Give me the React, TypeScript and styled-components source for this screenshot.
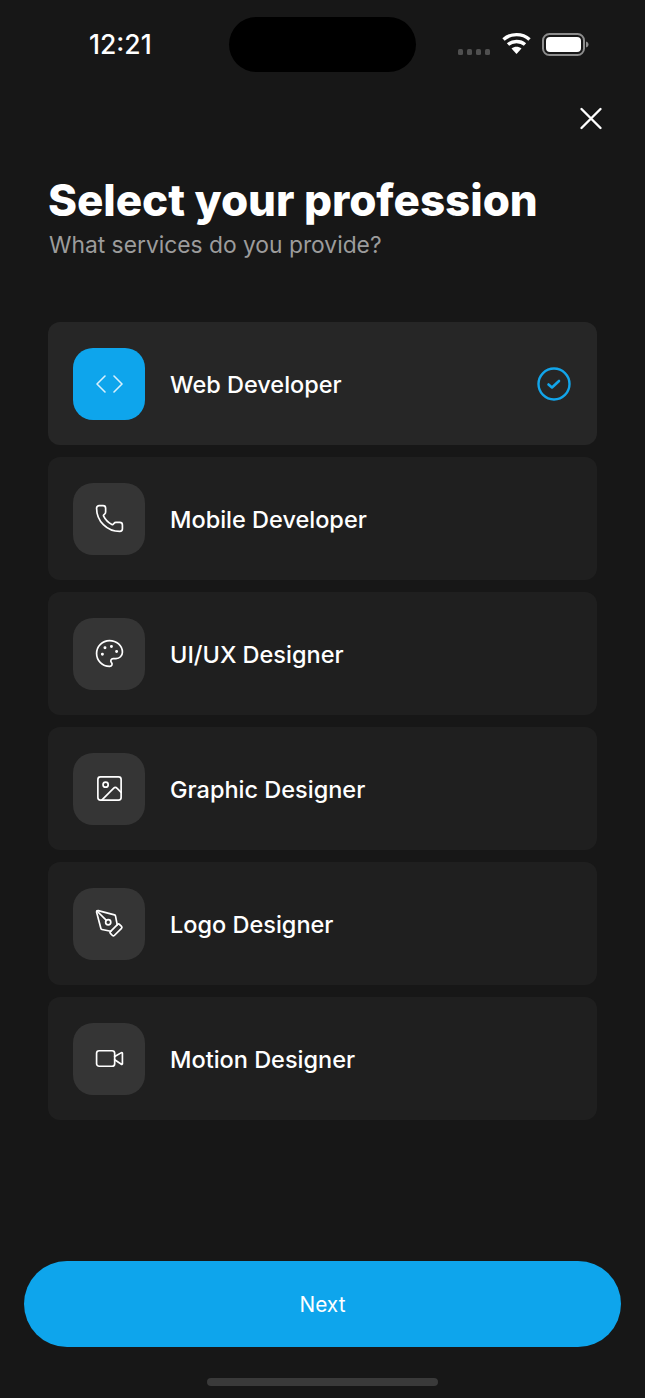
import React from "react";
import styled, { createGlobalStyle } from "styled-components";
import { Phone, Palette, Image, PenTool, Video } from "lucide-react";

const Global = createGlobalStyle`
  html, body { margin: 0; padding: 0; background: #171717; }
  * { box-sizing: border-box; }
  body { font-family: Inter, "Liberation Sans", sans-serif; color: #fff; }
`;

const Screen = styled.div`
  width: 645px;
  height: 1398px;
  display: flex;
  flex-direction: column;
  background: #171717;
  overflow: hidden;
`;

const StatusBar = styled.div`
  display: grid;
  grid-template-columns: 229px 187px 1fr;
  align-items: center;
  height: 55px;
  margin-top: 17px;
`;

const Time = styled.div`
  padding-left: 89px;
  font-size: 26.5px;
  font-weight: 500;
  letter-spacing: 0;
  line-height: 55px;
`;

const Island = styled.div`
  height: 55px;
  background: #000;
  border-radius: 28px;
`;

const StatusIcons = styled.div`
  display: flex;
  align-items: center;
  justify-content: flex-start;
  padding-left: 42px;
  height: 55px;
`;

const CloseRow = styled.div`
  display: flex;
  justify-content: flex-end;
  padding: 35px 42px 0 0;
`;

const Heading = styled.div`
  padding: 43px 48px 0;
`;

const Title = styled.h1`
  margin: 0;
  font-size: 44px;
  line-height: 52px;
  font-weight: 800;
  letter-spacing: -0.06px;
`;

const Subtitle = styled.p`
  margin: 4px 0 1px 1px;
  font-size: 22.8px;
  line-height: 30px;
  font-weight: 400;
  color: #9c9c9c;
`;

const List = styled.div`
  display: flex;
  flex-direction: column;
  gap: 12px;
  margin: 61px 48px 0;
`;

const Card = styled.div<{ $selected?: boolean }>`
  height: 123px;
  display: flex;
  align-items: center;
  gap: 25px;
  padding: 0 26px 0 25px;
  border-radius: 12px;
  background: ${(p) => (p.$selected ? "#262626" : "#1f1f1f")};
`;

const Tile = styled.div<{ $selected?: boolean }>`
  width: 72px;
  height: 72px;
  flex: none;
  display: flex;
  align-items: center;
  justify-content: center;
  border-radius: 20px;
  color: #fff;
  background: ${(p) => (p.$selected ? "#0ea5ec" : "#353535")};
`;

const Label = styled.div`
  flex: 1;
  margin-top: 2px;
  font-size: 23.5px;
  font-weight: 500;
  line-height: 30px;
`;

const Footer = styled.div`
  margin-top: auto;
  padding: 0 24px;
  display: flex;
  flex-direction: column;
  align-items: center;
`;

const NextButton = styled.button`
  width: 100%;
  height: 86px;
  border: 0;
  border-radius: 43px;
  background: #0ea5ec;
  color: #fff;
  font-family: inherit;
  font-size: 20.8px;
  font-weight: 400;
`;

const HomeBar = styled.div`
  width: 231px;
  height: 8px;
  margin: 31px 0 12px;
  border-radius: 4px;
  background: #3a3a3a;
`;

const CodeIcon = () => (
  <svg width="28" height="28" viewBox="0 0 28 28" fill="none" stroke="#d8f0fc" strokeWidth="1.6" strokeLinecap="round" strokeLinejoin="round">
    <path d="M10 6 2 14l8 8" />
    <path d="M19 6l8 8-8 8" />
  </svg>
);

const CheckIcon = () => (
  <svg width="34" height="34" viewBox="0 0 34 34" fill="none" stroke="#12a5ea" strokeLinecap="round" strokeLinejoin="round">
    <circle cx="17" cy="17" r="15.500" strokeWidth="2.400" />
    <path d="M11.500 17.500 15 20.500 22 14" strokeWidth="2.600" />
  </svg>
);

const StatusGlyphs = () => (
  <svg width="132" height="30" viewBox="0 0 132 30" fill="none">
    <g fill="#4f4f4f">
      <rect x="0" y="19" width="5" height="6" rx="1.500" />
      <rect x="9" y="19" width="5" height="6" rx="1.500" />
      <rect x="18" y="19" width="5" height="6" rx="1.500" />
      <rect x="27" y="19" width="5" height="6" rx="1.500" />
    </g>
    <g stroke="#fff" strokeWidth="3.400" fill="none">
      <path d="M45.500 9.500C52.500 3 64.500 3 71.500 9.500" />
      <path d="M50 14.500C54.500 10.500 62.500 10.500 67 14.500" />
    </g>
    <path d="M53.500 18.500C56.500 16 60.500 16 63.500 18.500L58.500 24Z" fill="#fff" />
    <rect x="85" y="4" width="41" height="21" rx="6.500" stroke="#8c8c8c" strokeWidth="2" />
    <rect x="88" y="7" width="35" height="15" rx="4" fill="#fff" />
    <path d="M128 11.500c1.500.4 2.500 1.500 2.500 3s-1 2.600-2.500 3z" fill="#8c8c8c" />
  </svg>
);

const CloseIcon = () => (
  <svg width="24" height="24" viewBox="0 0 24 24" stroke="#fff" strokeWidth="2.400" strokeLinecap="round">
    <path d="M2.500 2 21.500 21M21.500 2 2.500 21" />
  </svg>
);

const items = [
  { label: "Web Developer", icon: <CodeIcon />, selected: true },
  { label: "Mobile Developer", icon: <Phone size={31} strokeWidth={1.3} /> },
  { label: "UI/UX Designer", icon: <Palette size={31} strokeWidth={1.3} /> },
  { label: "Graphic Designer", icon: <Image size={31} strokeWidth={1.3} /> },
  { label: "Logo Designer", icon: <PenTool size={31} strokeWidth={1.3} /> },
  { label: "Motion Designer", icon: <Video size={31} strokeWidth={1.3} /> },
];

export default function App() {
  return (
    <Screen>
      <Global />
      <StatusBar>
        <Time>12:21</Time>
        <Island />
        <StatusIcons>
          <StatusGlyphs />
        </StatusIcons>
      </StatusBar>
      <CloseRow>
        <CloseIcon />
      </CloseRow>
      <Heading>
        <Title>Select your profession</Title>
        <Subtitle>What services do you provide?</Subtitle>
      </Heading>
      <List>
        {items.map((item) => (
          <Card key={item.label} $selected={item.selected}>
            <Tile $selected={item.selected}>{item.icon}</Tile>
            <Label>{item.label}</Label>
            {item.selected && <CheckIcon />}
          </Card>
        ))}
      </List>
      <Footer>
        <NextButton>Next</NextButton>
        <HomeBar />
      </Footer>
    </Screen>
  );
}
